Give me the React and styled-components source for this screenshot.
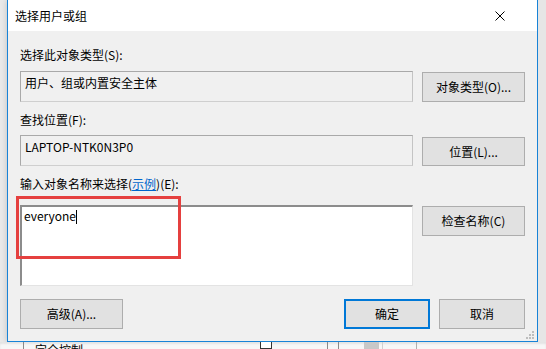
import React from "react";
import styled, { createGlobalStyle } from "styled-components";

const Global = createGlobalStyle`
  html, body { margin: 0; padding: 0; background: #ececec; }
  body { font-family: "Microsoft YaHei UI", "Noto Sans CJK SC", "Noto Sans", sans-serif; font-size: 12px; color: #000; }
`;

const Screen = styled.div`
  width: 546px;
  height: 349px;
  overflow: hidden;
  display: flex;
  flex-direction: column;
  background: #ececec;
`;

const TopArea = styled.div`
  display: flex;
  height: 342px;
  flex: none;
`;

const Gutter = styled.div`
  width: ${(p) => p.$w}px;
  flex: none;
  background: ${(p) => p.$bg};
  position: relative;
`;

const Dialog = styled.div`
  width: 531px;
  flex: none;
  box-sizing: border-box;
  border: 1px solid #1883d7;
  border-top: none;
  display: flex;
  flex-direction: column;
  background: #f0f0f0;
  position: relative;
  box-shadow: 0 0 6px rgba(0,0,0,0.18);
`;

const TitleBar = styled.div`
  height: 31px;
  flex: none;
  background: #fff;
  display: flex;
  align-items: center;
  justify-content: space-between;
  padding: 0 32px 0 7px;
`;

const Title = styled.span`
  font-size: 12px;
  line-height: 16px;
  padding-top: 1px;
`;

const Body = styled.div`
  flex: 1;
  padding: 16px 12px 0 12px;
  display: flex;
  flex-direction: column;
`;

const Label = styled.div`
  height: 16px;
  line-height: 16px;
  margin-top: ${(p) => p.$mt || 0}px;
  white-space: nowrap;
`;

const Link = styled.span`
  color: #0066cc;
  text-decoration: underline;
`;

const Row = styled.div`
  display: grid;
  grid-template-columns: 393px 103px;
  column-gap: 9px;
  align-items: start;
  margin-top: ${(p) => p.$mt}px;
`;

const ReadBox = styled.div`
  box-sizing: border-box;
  height: 31px;
  border: 1px solid #a9a9a9;
  border-bottom-color: #cfcfcf;
  border-right-color: #c4c4c4;
  padding: 3px 0 0 4px;
  line-height: 16px;
  background: #f0f0f0;
`;

const Button = styled.div`
  box-sizing: border-box;
  height: ${(p) => p.$h || 30}px;
  width: ${(p) => (p.$w ? `${p.$w}px` : "auto")};
  margin-top: ${(p) => p.$mt || 0}px;
  background: #e1e1e1;
  border: ${(p) => (p.$default ? "2px solid #0078d7" : "1px solid #adadad")};
  display: flex;
  align-items: center;
  justify-content: center;
  line-height: 16px;
  white-space: nowrap;
`;

const InputCell = styled.div`
  position: relative;
`;

const Input = styled.div`
  box-sizing: border-box;
  height: 81px;
  background: #fff;
  border-top: 2px solid #8c8c8c;
  border-left: 2px solid #8c8c8c;
  border-right: 1px solid #e3e3e3;
  border-bottom: 1px solid #e3e3e3;
  padding: 1px 0 0 2px;
  line-height: 16px;
  display: flex;
  align-items: flex-start;
`;

const Caret = styled.span`
  display: inline-block;
  width: 1px;
  height: 14px;
  background: #000;
  margin-top: 2px;
`;

const Highlight = styled.div`
  position: absolute;
  left: -4px;
  top: -9px;
  width: 165px;
  height: 63px;
  box-sizing: border-box;
  border: 3px solid #e5403f;
  pointer-events: none;
`;

const Footer = styled.div`
  display: flex;
  margin-top: 13px;
  gap: 9px;
`;

const Spacer = styled.div`
  flex: 1;
`;

const Grip = styled.svg`
  position: absolute;
  right: 3px;
  bottom: 2px;
`;

const BottomStrip = styled.div`
  height: 7px;
  flex: none;
  background: #f7f7f7;
  display: flex;
  align-items: stretch;
  position: relative;
  box-shadow: inset 0 2px 2px rgba(0,0,0,0.08);
`;

const VLine = styled.div`
  width: 1px;
  background: ${(p) => p.$c || "#8a8a8a"};
  margin-left: ${(p) => p.$ml}px;
  flex: none;
`;

const StripText = styled.div`
  margin-left: ${(p) => p.$ml}px;
  font-size: 12px;
  line-height: 16px;
  height: 7px;
  overflow: hidden;
  white-space: nowrap;
  width: 60px;
  flex: none;
`;

const StripBox = styled.div`
  margin-left: ${(p) => p.$ml}px;
  width: ${(p) => p.$w}px;
  flex: none;
  box-sizing: border-box;
  border: ${(p) => p.$border || "none"};
  border-top: none;
  background: ${(p) => p.$bg || "transparent"};
`;

function CloseIcon() {
  return (
    <svg width="10" height="10" viewBox="0 0 10 10">
      <path d="M0.5 0.5 L9.5 9.5 M9.5 0.5 L0.5 9.5" stroke="#000" strokeWidth="1" fill="none" />
    </svg>
  );
}

export default function App() {
  return (
    <>
      <Global />
      <Screen>
        <TopArea>
          <Gutter $w={7} $bg="#e9e9e9" />
          <Dialog>
            <TitleBar>
              <Title>选择用户或组</Title>
              <CloseIcon />
            </TitleBar>
            <Body>
              <Label>选择此对象类型(S):</Label>
              <Row $mt={8}>
                <ReadBox>用户、组或内置安全主体</ReadBox>
                <Button $mt={1}>对象类型(O)...</Button>
              </Row>
              <Label $mt={10}>查找位置(F):</Label>
              <Row $mt={7}>
                <ReadBox>LAPTOP-NTK0N3P0</ReadBox>
                <Button $mt={2} $h={29}>位置(L)...</Button>
              </Row>
              <Label $mt={10}>
                输入对象名称来选择(<Link>示例</Link>)(E):
              </Label>
              <Row $mt={13}>
                <InputCell>
                  <Input>
                    everyone
                    <Caret />
                  </Input>
                  <Highlight />
                </InputCell>
                <Button $mt={1}>检查名称(C)</Button>
              </Row>
              <Footer>
                <Button $w={103}>高级(A)...</Button>
                <Spacer />
                <Button $default $w={86}>确定</Button>
                <Button $w={86}>取消</Button>
              </Footer>
            </Body>
            <Grip width="8" height="8" viewBox="0 0 8 8">
              <rect x="6" y="0" width="2" height="2" fill="#bdbdbd" />
              <rect x="3" y="3" width="2" height="2" fill="#bdbdbd" />
              <rect x="6" y="3" width="2" height="2" fill="#bdbdbd" />
              <rect x="0" y="6" width="2" height="2" fill="#bdbdbd" />
              <rect x="3" y="6" width="2" height="2" fill="#bdbdbd" />
              <rect x="6" y="6" width="2" height="2" fill="#bdbdbd" />
            </Grip>
          </Dialog>
          <Gutter $w={8} $bg="#e6e6e6" />
        </TopArea>
        <BottomStrip>
          <VLine $ml={23} />
          <StripText $ml={11}>完全控制</StripText>
          <StripBox $ml={165} $w={12} $border="1px solid #333" $bg="#fff" />
          <VLine $ml={55} />
          <VLine $ml={10} />
          <StripBox $ml={25} $w={15} $bg="#c8c8c8" />
          <VLine $ml={3} $c="#d0d0d0" />
          <VLine $ml={33} $c="#b0b0b0" />
        </BottomStrip>
      </Screen>
    </>
  );
}
